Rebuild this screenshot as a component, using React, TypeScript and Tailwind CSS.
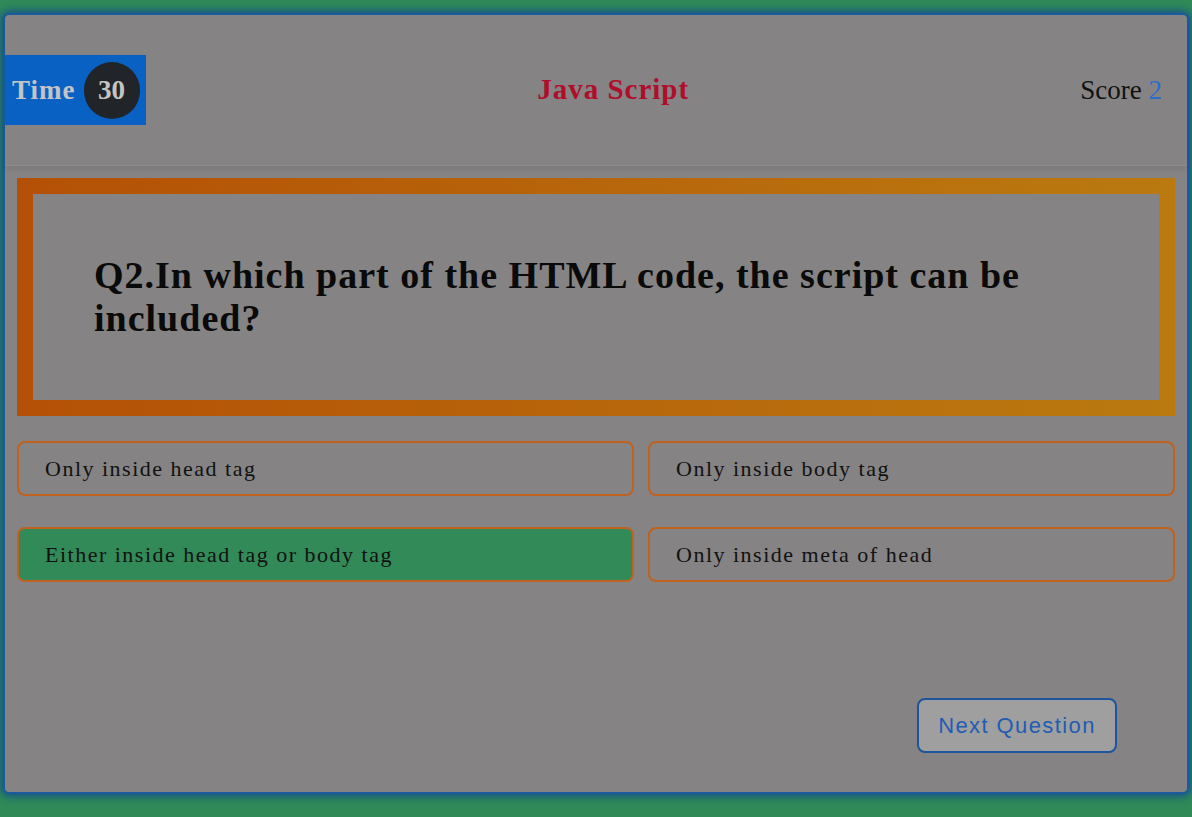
const options = [
  { text: "Only inside head tag", correct: false },
  { text: "Only inside body tag", correct: false },
  { text: "Either inside head tag or body tag", correct: true },
  { text: "Only inside meta of head", correct: false },
];

const serif = "font-['Liberation_Serif','Times_New_Roman',serif]";

const Header = () => {
  return (
    <div className="flex h-[151px] items-center justify-between border-b border-[#8e8d8d] shadow-[0_3px_4px_rgba(0,0,0,0.08)] pr-[25px]">
      <div className="flex h-[70px] w-[141px] items-center gap-[8px] bg-[#0a61c4] pl-[7px]">
        <span className={`${serif} text-[27px] font-bold tracking-[1px] text-[#c4c4c4]`}>Time</span>
        <span className={`${serif} flex h-[57px] w-[56px] items-center justify-center rounded-full bg-[#212428] text-[27px] font-bold text-[#c4c4c4]`}>
          30
        </span>
      </div>
      <h1 className={`${serif} text-[29px] font-bold tracking-[1px] text-[#b00d2b]`}>Java Script</h1>
      <div className={`${serif} text-[27px] text-[#111]`}>
        Score <span className="text-[#2b6bcf]">2</span>
      </div>
    </div>
  );
};

export default function App() {
  return (
    <div className="min-h-screen bg-[#2f8a57] px-[3px] pt-[13px]">
      <div className="flex h-[781px] flex-col rounded-[6px] border-2 border-[#1b5a9c] bg-[#858383] shadow-[0_0_8px_2px_rgba(16,70,150,0.9)]">
        <Header />

        <div className="mx-[12px] mt-[12px] bg-linear-to-r from-[#b45006] to-[#ba7a10] p-[16px]">
          <div className="flex h-[206px] items-center bg-[#858383] pl-[61px] pr-[30px]">
            <h2 className={`${serif} text-[38px] font-bold leading-[43px] tracking-[1px] text-[#0a0a0a]`}>
              Q2.In which part of the HTML code, the script can be included?
            </h2>
          </div>
        </div>

        <div className="mx-[12px] mt-[25px] grid grid-cols-[617fr_527fr] gap-x-[14px] gap-y-[31px]">
          {options.map((o) => (
            <div
              key={o.text}
              className={`${serif} flex h-[55px] items-center rounded-[8px] border-2 border-[#c0621f] pl-[26px] text-[22px] tracking-[1.5px] text-[#111] ${
                o.correct ? "bg-[#318a57]" : ""
              }`}
            >
              {o.text}
            </div>
          ))}
        </div>

        <div className="mt-[116px] flex justify-end pr-[70px]">
          <button className="h-[55px] w-[200px] rounded-[8px] border-2 border-[#1d559d] bg-[#a09fa0] font-['Liberation_Sans',Arial,sans-serif] text-[22px] tracking-[1.4px] text-[#1f5cb4]">
            Next Question
          </button>
        </div>
      </div>
    </div>
  );
}
